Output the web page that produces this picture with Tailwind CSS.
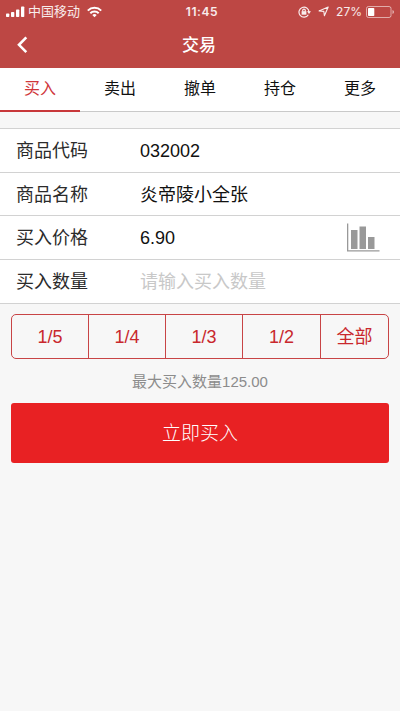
<!DOCTYPE html>
<html lang="zh-CN">
<head>
<meta charset="utf-8">
<meta name="viewport" content="width=device-width, initial-scale=1">
<title>交易</title>
<script src="https://cdn.jsdelivr.net/npm/@tailwindcss/browser@4"></script>
</head>
<body class="h-[711px] overflow-hidden bg-[#f7f7f7] font-['Liberation_Sans','Noto_Sans_CJK_SC',sans-serif] text-[#2b2b2b]">
  <header class="h-[68px] bg-[#bd4744] text-white">
    <div class="grid h-[22px] grid-cols-3 items-center pl-[6px] pr-[5px] text-[12px] leading-[22px]">
      <div class="flex items-center">
        <svg class="h-[12px] w-[19px]" viewBox="0 0 19 12" fill="currentColor"><rect x="0" y="7.5" width="3.3" height="3.5" rx=".8"/><rect x="5" y="6" width="3.3" height="5" rx=".8"/><rect x="10" y="3.5" width="3.3" height="7.5" rx=".8"/><rect x="15" y="0.5" width="3.3" height="10.5" rx=".8"/></svg>
        <span class="ml-[3px] pt-px text-[13px] text-white/90">中国移动</span>
        <svg class="ml-[7px] h-[12px] w-[15px]" viewBox="0 0 15 12" fill="none" stroke="currentColor" stroke-width="2"><path d="M.8 4.6a9.5 9.5 0 0 1 13.4 0"/><path d="M3.3 7.3a5.9 5.9 0 0 1 8.4 0"/><path d="M7.5 11.3 5.3 9a3.1 3.1 0 0 1 4.4 0z" fill="currentColor" stroke="none"/></svg>
      </div>
      <div class="pl-[3px] text-center font-['Inter'] text-[12px] font-semibold tracking-[0.6px] text-white/90">11:45</div>
      <div class="flex items-center justify-end text-white/90">
        <svg class="h-[12px] w-[13px]" viewBox="0 0 13 12" fill="none" stroke="currentColor" stroke-width="1.2"><path d="M10.3 8.7A5 5 0 1 1 11 6"/><path d="M9 5.3h4L11 8z" fill="currentColor" stroke="none"/><rect x="3.6" y="5.2" width="4.8" height="3.5" fill="currentColor" stroke="none"/><path d="M4.7 5.5V4.4a1.3 1.3 0 0 1 2.6 0v1.1"/></svg>
        <svg class="ml-[7px] h-[11px] w-[11px]" viewBox="0 0 11 11" fill="none" stroke="currentColor" stroke-width="1.1"><path d="M10.2 1 6.4 9.8 5.8 5.4 1 4.9z" stroke-linejoin="round"/></svg>
        <span class="ml-[7px] font-['Inter'] text-[12px]">27%</span>
        <svg class="ml-[4px] h-[12px] w-[29px]" viewBox="0 0 29 12" fill="none"><rect x=".5" y=".5" width="24.5" height="11" rx="2" stroke="#fff" stroke-opacity=".55"/><rect x="2" y="2" width="6.3" height="8" rx=".8" fill="#fff"/><path d="M26.5 4q1.5.4 1.5 2t-1.5 2z" fill="#fff" fill-opacity=".6"/></svg>
      </div>
    </div>
    <div class="grid h-[46px] grid-cols-[1fr_auto_1fr] items-center px-[17px]">
      <svg class="h-[18px] w-[12px]" viewBox="0 0 12 18" fill="none" stroke="currentColor" stroke-width="2.6"><path d="M9.3 1.4 2 8.8l7.3 7.4"/></svg>
      <h1 class="pt-[2px] text-[17px] font-medium leading-[24px] -translate-x-px">交易</h1>
      <span></span>
    </div>
  </header>

  <nav class="grid h-[44px] grid-cols-5 border-b border-[#c9c9c9] bg-white text-center text-[16px] leading-[41px] text-[#111]">
    <div class="-mb-px border-b-2 border-[#c8373a] text-[#d0373b]">买入</div>
    <div>卖出</div>
    <div>撤单</div>
    <div>持仓</div>
    <div>更多</div>
  </nav>

  <section class="mt-[16px] grid h-[176px] grid-rows-[44px_43px_44px_44px] border-b border-[#d2d2d2] bg-white text-[18px]">
    <div class="flex items-center border-t border-[#d2d2d2] pl-4 pt-[2px]"><span class="w-[124px]">商品代码</span><span class="text-[#111]">032002</span></div>
    <div class="flex items-center border-t border-[#d2d2d2] pl-4 pt-[2px]"><span class="w-[124px]">商品名称</span><span class="text-[#111]">炎帝陵小全张</span></div>
    <div class="flex items-center border-t border-[#d2d2d2] pl-4 pr-[20px] pt-[2px]"><span class="w-[124px]">买入价格</span><span class="text-[#111]">6.90</span>
      <svg class="-mt-[2px] ml-auto h-[29px] w-[34px]" viewBox="0 0 34 29" fill="#999"><path d="M1 0.5h1.3v26.7H33.5v1.3H1z"/><rect x="5" y="7" width="6.5" height="19"/><rect x="13.5" y="3.5" width="6.5" height="22.5"/><rect x="22" y="14" width="6.5" height="12"/></svg>
    </div>
    <div class="flex items-center border-t border-[#d2d2d2] pl-4 pt-[2px]"><span class="w-[124px]">买入数量</span><span class="text-[#c8c8c8]">请输入买入数量</span></div>
  </section>

  <main class="px-[11px] pt-[10px]">
    <div class="grid h-[45px] grid-cols-[77px_77px_77px_78px_1fr] divide-x divide-[#c84446] rounded-[5px] border border-[#c84446] text-center text-[18px] leading-[45px] text-[#c9282d]">
      <div class="h-[43px]">1/5</div><div class="h-[43px]">1/4</div><div class="h-[43px]">1/3</div><div class="h-[43px]">1/2</div><div class="h-[43px]">全部</div>
    </div>
    <p class="mt-[12px] text-center text-[15px] leading-[22px] text-[#8c8c8c]">最大买入数量125.00</p>
    <button class="mt-[10px] block h-[60px] w-full rounded-[3px] bg-[#e82123] pt-[3px] text-[19px] font-light text-white">立即买入</button>
  </main>
</body>
</html>
